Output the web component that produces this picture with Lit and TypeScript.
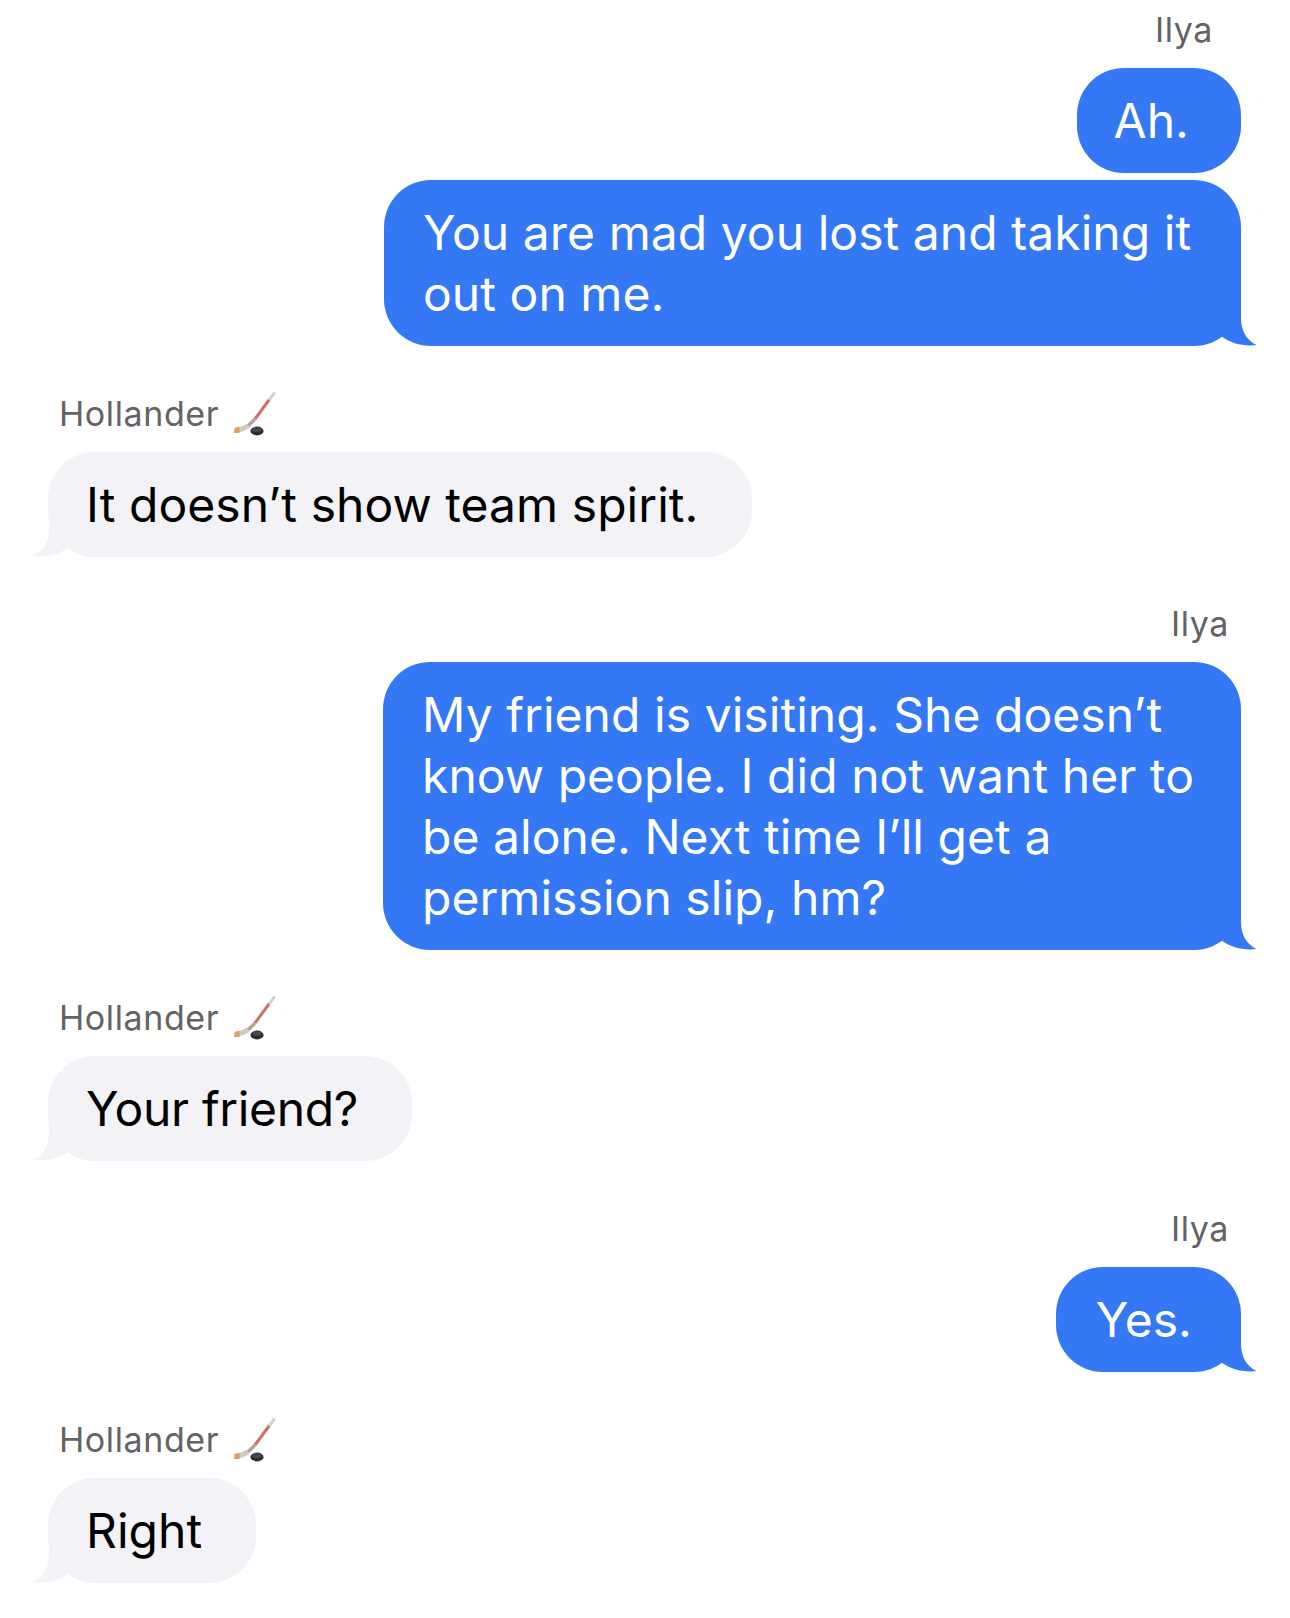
import { LitElement, html, css, svg } from 'lit';
import { customElement } from 'lit/decorators.js';

const stick = html`<svg class="stick" viewBox="0 0 44 46" width="44" height="46">
  <path d="M42 1.5 L37 8" stroke="#d2d2d6" stroke-width="3" stroke-linecap="round"/>
  <path d="M37 8 L23 27" stroke="#cf6f68" stroke-width="3"/>
  <path d="M23 27 L15 35" stroke="#b8a48e" stroke-width="3.4"/>
  <path d="M14 32 C11 34 8 35 6 35 L6.5 40.5 C10 40 15 38 18 35 Z" fill="#cfcbc2"/>
  <path d="M2.5 36 C4 35 6 35 7 35 L8 40.5 C6 41 4 41.2 2 41 Z" fill="#d9a25f"/>
  <ellipse cx="25" cy="39" rx="6.6" ry="4.4" fill="#2c2c2e"/>
  <ellipse cx="25" cy="37.6" rx="5" ry="2.4" fill="#48484a"/>
</svg>`;

// origin of the viewBox is the bubble's bottom outer corner
const tail = (cls: string) => svg`<svg class="tail ${cls}" viewBox="-30 -50 46 52" width="46" height="52">
  <path d="M-28 -48 L0 -48 L0 -28 C0 -16 5 -6 15.5 -1 C4 0.5 -10 -2 -20 -10 Z" />
</svg>`;

@customElement('app-root')
export class AppRoot extends LitElement {
  static styles = css`
    :host {
      display: block;
      width: 1290px;
      height: 1618px;
      background: #fff;
      font-family: Inter, 'Noto Sans', sans-serif;
      overflow: hidden;
    }
    .thread {
      display: flex;
      flex-direction: column;
      padding: 0 49px 0 48px;
    }
    .name {
      font-size: 34px;
      line-height: 40px;
      color: #636366;
      letter-spacing: 0.6px;
      display: flex;
      align-items: center;
    }
    .name.me { align-self: flex-end; margin-top: 48px; margin-bottom: 18px; margin-right: 12px; }
    .name.me.first { margin-top: 10px; margin-right: 28px; }
    .name.me.snug { margin-top: 47px; }
    .name.them { margin-top: 48px; margin-left: 11px; margin-bottom: 18px; }
    .stick { margin: -6px 0 -8px 13px; }
    .bubble {
      position: relative;
      font-size: 48px;
      line-height: 61px;
      letter-spacing: 0.05px;
      border-radius: 47px;
      padding: 22px 49px 22px 40px;
      box-sizing: border-box;
    }
    .bubble.me { align-self: flex-end; background: #3478f6; color: #fff; }
    .bubble.them { align-self: flex-start; background: #f2f2f7; color: #000; padding-left: 38px; padding-right: 54px; }
    .bubble.them.tight { letter-spacing: -0.35px; }
    .bubble.short { padding-left: 37px; padding-right: 52px; }
    .next { margin-top: 7px; }
    .tail { position: absolute; bottom: -2px; }
    .tail.right { right: -16px; fill: #3478f6; }
    .tail.left { left: -15px; fill: #f2f2f7; transform: scaleX(-1); }
    .wide { width: 858px; padding-right: 0; padding-left: 39px; }
    .next.wide { width: 857px; }
  `;

  me(text: unknown, hasTail = true, extra = '') {
    return html`<div class="bubble me ${extra}">${text}${hasTail ? tail('right') : ''}</div>`;
  }

  them(text: string, extra = '') {
    return html`<div class="name them">Hollander${stick}</div>
      <div class="bubble them ${extra}">${text}${tail('left')}</div>`;
  }

  render() {
    return html`<div class="thread">
      <div class="name me first">Ilya</div>
      ${this.me('Ah.', false, 'short')}
      ${this.me(html`You are mad you lost and taking it<br />out on me.`, true, 'next wide')}
      ${this.them('It doesn’t show team spirit.')}
      <div class="name me snug">Ilya</div>
      ${this.me(html`My friend is visiting. She doesn’t<br />know people. I did not want her to<br />be alone. Next time I’ll get a<br />permission slip, hm?`, true, 'wide')}
      ${this.them('Your friend?', 'tight')}
      <div class="name me">Ilya</div>
      ${this.me('Yes.')}
      ${this.them('Right')}
    </div>`;
  }
}
